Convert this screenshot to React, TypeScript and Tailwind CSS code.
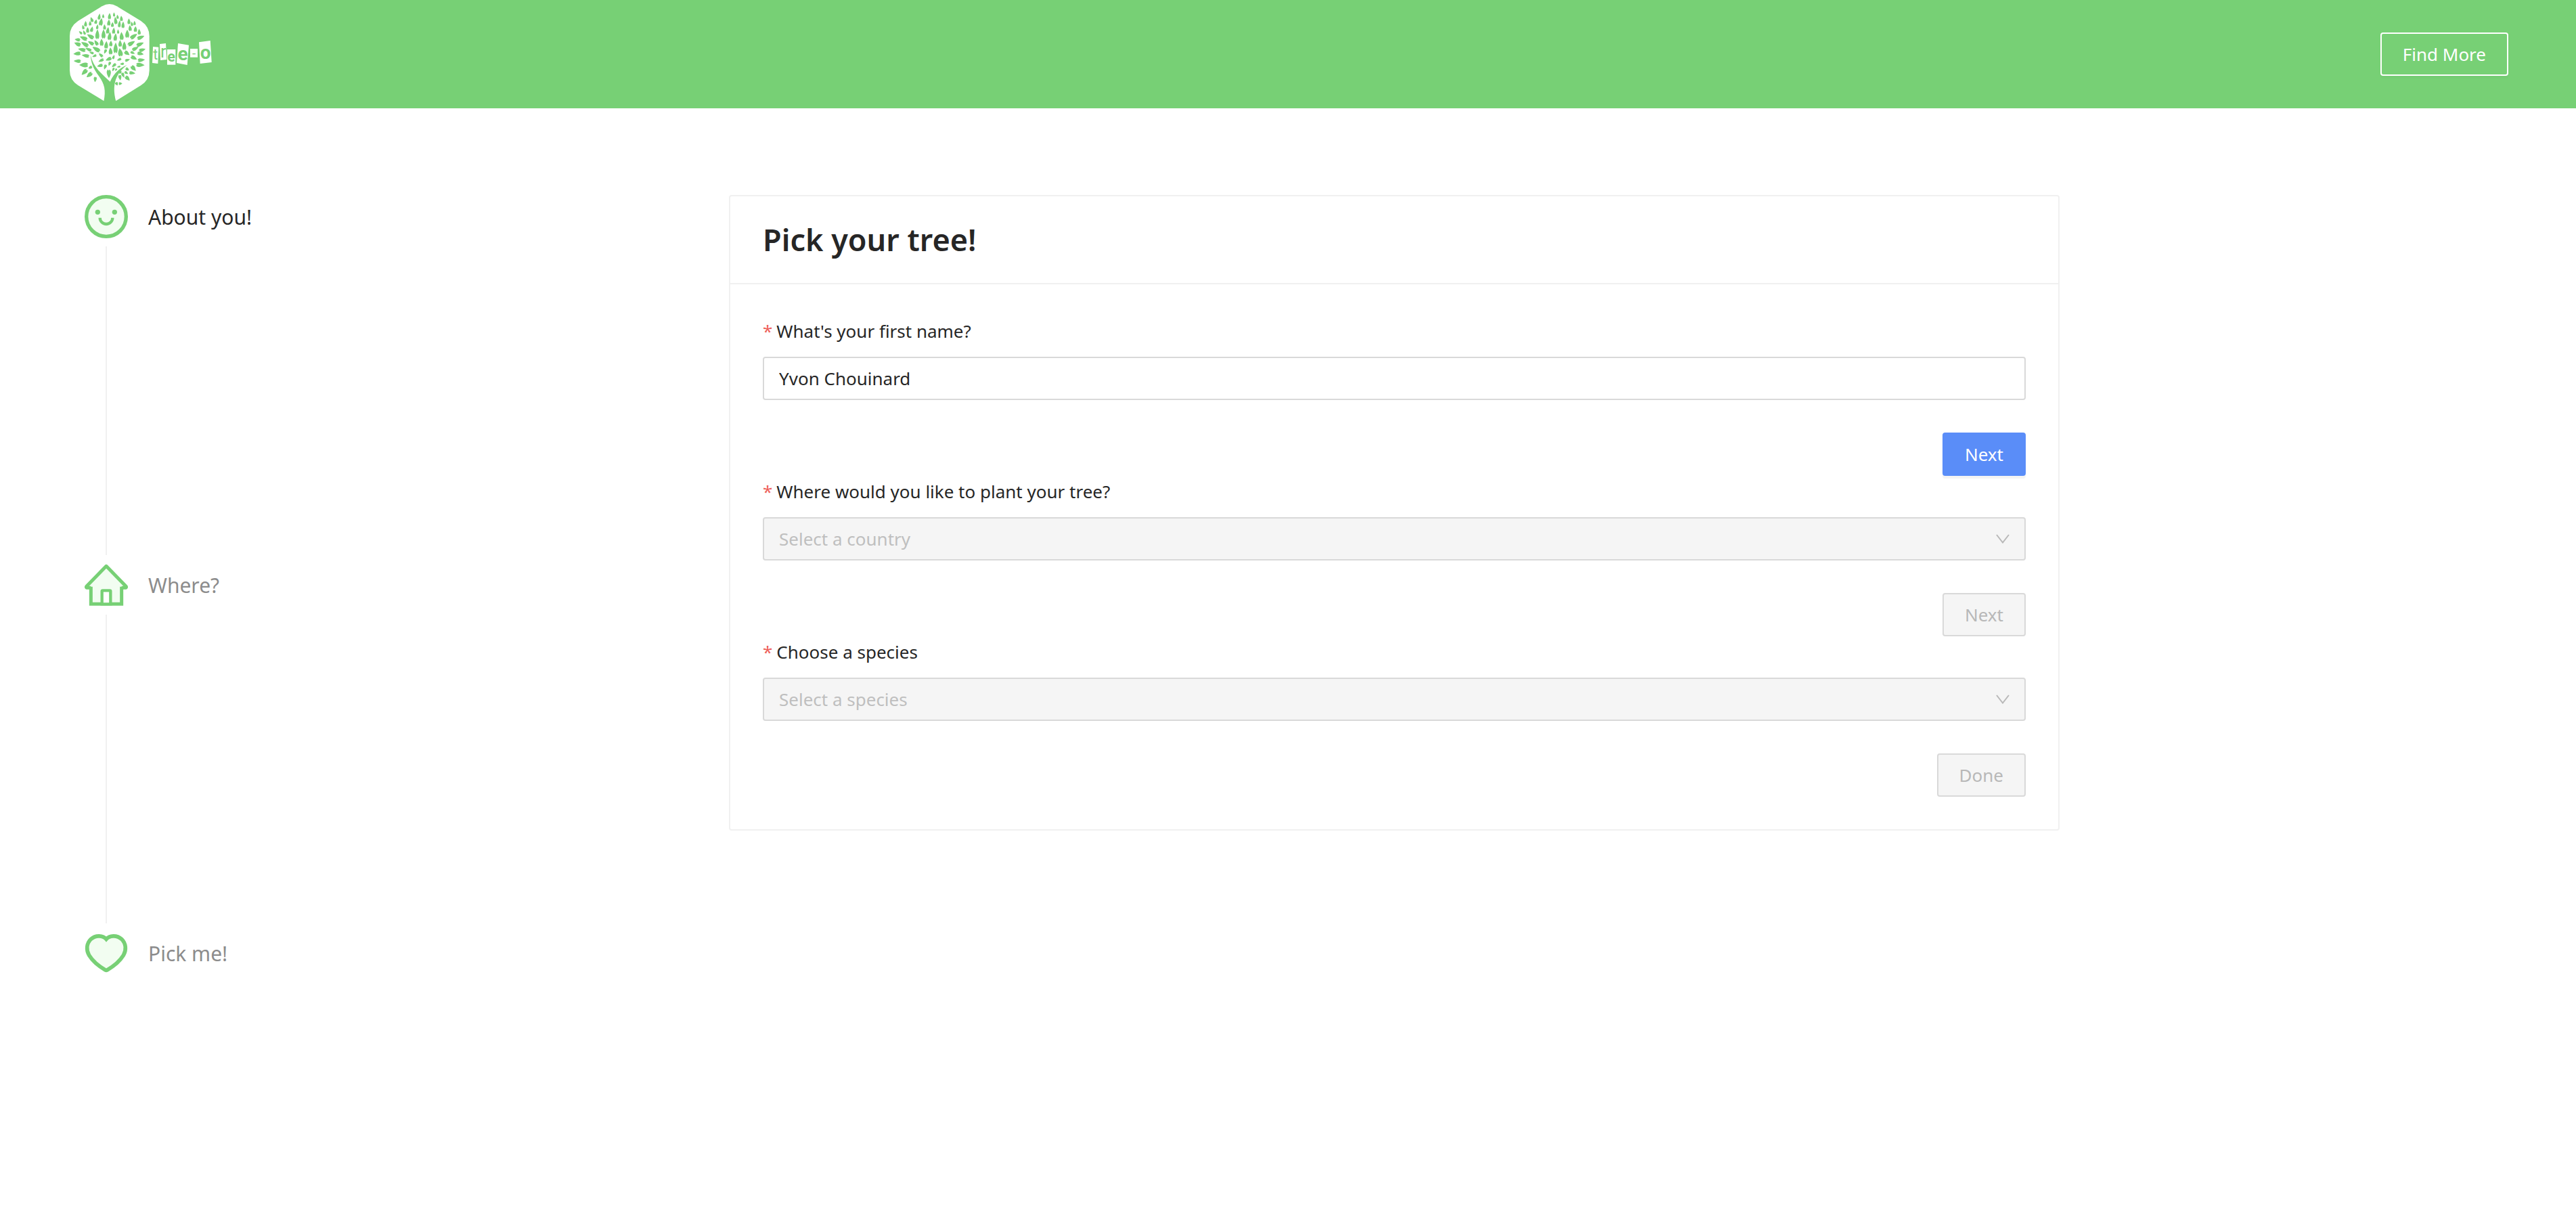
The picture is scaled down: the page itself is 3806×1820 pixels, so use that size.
import type { ReactNode } from 'react';

const GREEN = '#77d075';
const TINT = '#f2fdf1';

// Each leaf: tip x, tip y, base x, base y, width
const LEAVES: [number, number, number, number, number][] = [
  [172, 60, 168, 88, 12], [187, 62, 188, 80, 9], [216, 58, 215, 86, 13], [235, 55, 236, 74, 9],
  [250, 65, 252, 84, 10], [267, 70, 269, 94, 12], [132, 76, 141, 98, 12], [110, 93, 109, 118, 12],
  [129, 93, 130, 114, 11], [157, 86, 153, 106, 12], [181, 80, 175, 114, 16], [213, 86, 212, 114, 14],
  [240, 74, 245, 108, 14], [261, 90, 258, 122, 12], [276, 95, 275, 125, 13], [301, 82, 302, 108, 13],
  [313, 96, 316, 116, 10], [326, 92, 327, 112, 10], [96, 110, 101, 130, 10], [193, 108, 194, 132, 12],
  [229, 98, 228, 120, 12], [118, 120, 119, 146, 13], [140, 118, 134, 142, 13], [163, 108, 160, 130, 10],
  [210, 120, 206, 150, 14], [235, 122, 233, 150, 13], [253, 130, 254, 150, 9], [305, 112, 308, 138, 14],
  [331, 116, 330, 142, 14], [346, 128, 348, 154, 13], [162, 130, 161, 174, 17], [189, 130, 189, 172, 17],
  [218, 142, 214, 178, 16], [243, 148, 240, 182, 15], [268, 142, 270, 178, 17], [294, 132, 294, 168, 17],
  [180, 172, 181, 204, 16], [202, 182, 200, 216, 16], [222, 180, 221, 206, 14], [243, 188, 242, 236, 18],
  [262, 178, 263, 208, 15], [281, 184, 281, 222, 17], [219, 210, 221, 242, 16], [260, 214, 266, 250, 20],
  [80, 138, 94, 151, 10], [99, 134, 108, 154, 10], [61, 174, 86, 178, 14], [84, 162, 117, 176, 17],
  [116, 152, 146, 170, 17], [59, 189, 88, 201, 17], [90, 187, 122, 205, 17], [120, 183, 146, 198, 15],
  [149, 178, 164, 201, 14], [76, 216, 110, 224, 16], [108, 212, 136, 225, 13], [140, 208, 173, 228, 18],
  [55, 239, 88, 236, 16], [92, 244, 126, 250, 15], [57, 270, 89, 272, 15], [81, 288, 121, 288, 20],
  [92, 332, 116, 308, 18], [114, 342, 138, 322, 17], [151, 364, 153, 340, 13], [122, 304, 138, 294, 12],
  [126, 231, 146, 237, 10], [139, 252, 158, 244, 10], [168, 236, 186, 252, 12], [160, 294, 186, 288, 14],
  [166, 274, 190, 262, 12], [192, 308, 200, 286, 12], [213, 346, 212, 308, 18], [198, 268, 224, 256, 15],
  [212, 292, 219, 274, 11], [226, 298, 244, 282, 12], [228, 316, 236, 300, 9], [240, 314, 248, 304, 8],
  [192, 238, 201, 218, 11], [237, 244, 230, 262, 10], [248, 268, 268, 260, 11], [304, 244, 282, 228, 16],
  [306, 262, 284, 270, 12], [262, 284, 280, 282, 10], [248, 298, 264, 294, 8],
  [338, 150, 308, 171, 17], [370, 159, 338, 172, 16], [328, 182, 297, 201, 17], [367, 189, 335, 203, 16],
  [344, 208, 316, 223, 15], [375, 217, 346, 226, 15], [328, 238, 308, 230, 11], [367, 241, 338, 235, 15],
  [337, 263, 310, 250, 16], [373, 264, 340, 268, 16], [371, 289, 333, 287, 18], [332, 314, 312, 292, 18],
  [330, 325, 302, 322, 14], [305, 357, 286, 338, 16], [302, 312, 287, 302, 13], [298, 328, 282, 318, 11],
  [264, 356, 260, 332, 13], [280, 344, 271, 322, 12], [251, 379, 244, 364, 12], [272, 370, 256, 371, 12],
  [260, 328, 266, 314, 10],
];

function leafPath([tx, ty, bx, by, w]: [number, number, number, number, number]) {
  const dx = bx - tx;
  const dy = by - ty;
  const len = Math.hypot(dx, dy);
  const nx = (-dy / len) * w * 0.62;
  const ny = (dx / len) * w * 0.62;
  const at = (t: number, s: number) => `${(tx + dx * t + nx * s).toFixed(1)} ${(ty + dy * t + ny * s).toFixed(1)}`;
  return `M${at(0, 0)}C${at(0.35, 0.7)} ${at(0.8, 1.3)} ${at(1, 0.3)}L${at(0.86, 0)}L${at(1, -0.3)}C${at(0.8, -1.3)} ${at(0.35, -0.7)} ${at(0, 0)}Z`;
}

function Logo() {
  return (
    <svg viewBox="39 0 639 480" className="h-40 w-[213px]" role="img" aria-label="tree-o">
      <path
        d="M182 28Q215 8 248 28L355 93Q392 118 392 160V312Q392 355 355 378L244 447H190L76 378Q39 355 39 312V160Q39 118 76 93Z"
        fill="#fff"
      />
      <g fill={GREEN}>
        {LEAVES.map((leaf, i) => (
          <path key={i} d={leafPath(leaf)} />
        ))}
        <path d="M131 244C144 300 182 328 218 362C234 325 262 300 293 288C246 325 224 370 244 449H190C200 400 193 372 170 340C142 302 134 280 131 244Z" />
      </g>
      <g fill="#fff">
        <path d="M408 207L433 209L430 282L405 279Z" />
        <path d="M438 195L465 192L469 264L441 267Z" />
        <path d="M471 219H508V287H471Z" />
        <path d="M519 192L567 200L560 288L513 279Z" />
        <path d="M573 216H606V254H573Z" />
        <path d="M612 187L662 180L668 276L617 282Z" />
      </g>
      <g fill={GREEN} fontFamily='Roboto, "Liberation Sans", sans-serif' textAnchor="middle">
        <text x="419" y="265" fontSize="64">t</text>
        <text x="454" y="254" fontSize="76">r</text>
        <text x="489" y="274" fontSize="64" fontWeight="700">e</text>
        <text x="540" y="267" fontSize="84" fontWeight="700">e</text>
        <text x="590" y="254" fontSize="56">-</text>
        <text x="641" y="262" fontSize="84" fontWeight="700">o</text>
      </g>
    </svg>
  );
}

function IconFrame({ children }: { children: ReactNode }) {
  return (
    <svg viewBox="0 0 192 192" className="size-16 shrink-0" fill="none" stroke={GREEN} strokeWidth="16" aria-hidden="true">
      {children}
    </svg>
  );
}

function SmileIcon() {
  return (
    <IconFrame>
      <circle cx="96" cy="96" r="88" fill={TINT} />
      <circle cx="58" cy="76" r="11" fill={GREEN} stroke="none" />
      <circle cx="133" cy="76" r="11" fill={GREEN} stroke="none" />
      <path d="M68 101A28 28 0 0 0 124 101" strokeWidth="13" />
    </IconFrame>
  );
}

function HomeIcon() {
  return (
    <IconFrame>
      <path d="M96 14L186 106H164V181H28V106H6Z" fill={TINT} stroke="none" />
      <path d="M28 109H9Q6 106 9 102L96 13L183 102Q186 106 183 109H164" strokeWidth="15" strokeLinejoin="round" />
      <path d="M28 104V181H164V104" strokeWidth="15" />
      <path d="M77 181V124Q77 121 80 121H112Q115 121 115 124V181Z" fill="#fff" strokeWidth="13" />
    </IconFrame>
  );
}

function HeartIcon() {
  return (
    <IconFrame>
      <path
        d="M96 34C82 18 50 14 28 34C8 54 6 82 20 106C36 132 66 156 92 171Q96 173 100 171C126 156 156 132 172 106C186 82 184 54 164 34C142 14 110 18 96 34Z"
        fill={TINT}
        strokeWidth="17"
      />
    </IconFrame>
  );
}

const STEPS = [
  { title: 'About you!', icon: <SmileIcon />, active: true },
  { title: 'Where?', icon: <HomeIcon />, active: false },
  { title: 'Pick me!', icon: <HeartIcon />, active: false },
];

function Steps() {
  return (
    <ol>
      {STEPS.map((step, i) => (
        <li key={step.title} className={i < STEPS.length - 1 ? 'flex min-h-[544px] gap-[30px]' : 'flex gap-[30px]'}>
          <div className="flex flex-col items-center">
            {step.icon}
            {i < STEPS.length - 1 && <span className="my-3 w-0.5 grow bg-[#f0f0f0]" />}
          </div>
          <span className={step.active ? 'text-[30px] leading-[66px] text-[#262626]' : 'text-[30px] leading-[66px] text-[#8c8c8c]'}>
            {step.title}
          </span>
        </li>
      ))}
    </ol>
  );
}

function FieldLabel({ htmlFor, children }: { htmlFor: string; children: ReactNode }) {
  return (
    <label htmlFor={htmlFor} className="flex h-[61px] gap-1.5 text-[26px] leading-[46px]">
      <span className="text-[#ee5f5b]">*</span>
      {children}
    </label>
  );
}

function SelectField({ id, label, placeholder }: { id: string; label: string; placeholder: string }) {
  return (
    <div>
      <FieldLabel htmlFor={id}>{label}</FieldLabel>
      <div className="relative">
        <select
          id={id}
          disabled
          defaultValue=""
          className="block h-16 w-full appearance-none rounded border-2 border-[#d9d9d9] bg-[#f5f5f5] px-[22px] text-[26px] text-[#bfbfbf] opacity-100"
        >
          <option value="">{placeholder}</option>
        </select>
        <svg
          viewBox="0 0 20 14"
          className="pointer-events-none absolute top-[25px] right-6 h-3.5 w-5"
          fill="none"
          stroke="#b8b8b8"
          strokeWidth="2"
          aria-hidden="true"
        >
          <path d="M1 1L10 12.500L19 1" />
        </svg>
      </div>
    </div>
  );
}

function ActionRow({ children, primary = false }: { children: string; primary?: boolean }) {
  return (
    <div className="mt-12 flex justify-end">
      <button
        type="button"
        disabled={!primary}
        className={
          primary
            ? 'h-16 rounded border-2 border-[#5a8df8] bg-[#5a8df8] px-[31px] text-[26px] text-white shadow-[0_4px_0_rgba(0,0,0,0.045)]'
            : 'h-16 rounded border-2 border-[#d9d9d9] bg-[#f5f5f5] px-[31px] text-[26px] text-[#b8b8b8]'
        }
      >
        {children}
      </button>
    </div>
  );
}

export default function App() {
  return (
    <div className="min-h-screen bg-white font-['Noto_Sans',sans-serif] text-[#262626]">
      <header className="flex h-40 items-center justify-between bg-[#77d075] px-[100px]">
        <a href="#" className="ml-[3px]">
          <Logo />
        </a>
        <button
          type="button"
          className="h-16 rounded border-2 border-white px-[31px] text-[26px] text-white shadow-[0_4px_0_rgba(0,0,0,0.015)]"
        >
          Find More
        </button>
      </header>

      <main className="grid grid-cols-[952fr_1966fr_638fr] px-[125px] pt-32">
        <Steps />
        <section className="self-start rounded border-2 border-[#f0f0f0]">
          <h1 className="border-b-2 border-[#f0f0f0] px-12 py-8 text-[45px] leading-16 font-semibold">Pick your tree!</h1>
          <form className="px-12 pt-[46px] pb-12">
            <FieldLabel htmlFor="first-name">What's your first name?</FieldLabel>
            <input
              id="first-name"
              type="text"
              defaultValue="Yvon Chouinard"
              className="block h-16 w-full rounded border-2 border-[#d9d9d9] bg-white px-[22px] text-[26px]"
            />
            <ActionRow primary>Next</ActionRow>
            <SelectField id="country" label="Where would you like to plant your tree?" placeholder="Select a country" />
            <ActionRow>Next</ActionRow>
            <SelectField id="species" label="Choose a species" placeholder="Select a species" />
            <ActionRow>Done</ActionRow>
          </form>
        </section>
      </main>
    </div>
  );
}
